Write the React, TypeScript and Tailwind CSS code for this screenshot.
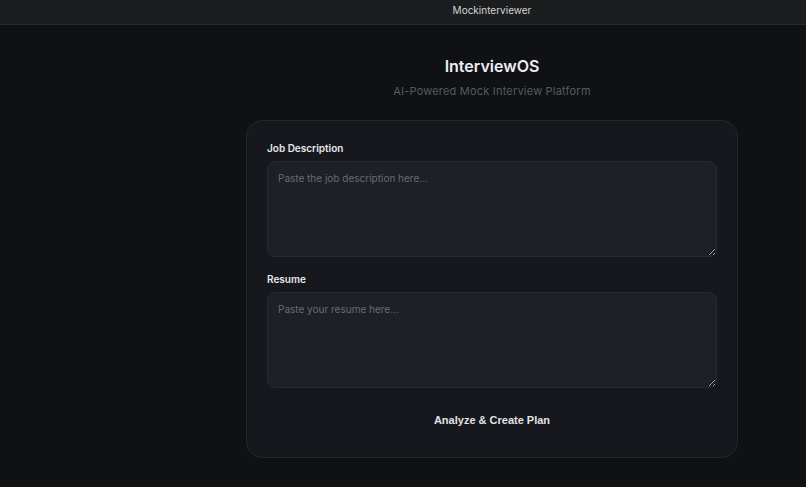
const fieldClass =
  "block w-full h-[96px] rounded-lg border border-[#272a30] bg-[#1d2025] px-[10px] py-[9px] text-[10px] leading-[15px] text-[#e5e7eb] placeholder:text-[#686c72] outline-none resize-y";

function Field({ label, placeholder }: { label: string; placeholder: string }) {
  return (
    <div>
      <label className="block mb-[6px] text-[10px] leading-[14px] font-semibold text-[#e8e9eb]">{label}</label>
      <textarea className={fieldClass} placeholder={placeholder} />
    </div>
  );
}

export default function App() {
  return (
    <div className="min-h-[487px] h-[487px] overflow-hidden bg-[#0f1115] font-['Inter','Liberation_Sans',sans-serif]">
      <header className="h-[25px] flex justify-center pl-[178px] bg-[#1c1d1f] border-b border-[#292a2d]">
        <span className="text-[10px] leading-[20px] text-[#d2d3d5]">Mockinterviewer</span>
      </header>
      <main className="pl-[178px]">
        <div className="w-[492px] mx-auto pt-[29px]">
          <div className="text-center">
            <h1 className="text-[16px] leading-[24px] font-semibold text-[#eceef0]">InterviewOS</h1>
            <p className="mt-[3px] text-[11px] leading-[20px] tracking-[0.2px] text-[#565a60]">
              AI-Powered Mock Interview Platform
            </p>
          </div>
          <div className="mt-[19px] h-[338px] rounded-[16px] border border-[#24262b] bg-[#16181d] px-[20px] pt-[20px]">
            <div className="flex flex-col gap-[15px]">
              <Field label="Job Description" placeholder="Paste the job description here..." />
              <Field label="Resume" placeholder="Paste your resume here..." />
            </div>
            <button className="block w-full mt-[22px] text-center text-[11px] leading-[20px] font-bold text-[#e1e2e5] font-['Liberation_Sans',sans-serif]">
              Analyze &amp; Create Plan
            </button>
          </div>
        </div>
      </main>
    </div>
  );
}
